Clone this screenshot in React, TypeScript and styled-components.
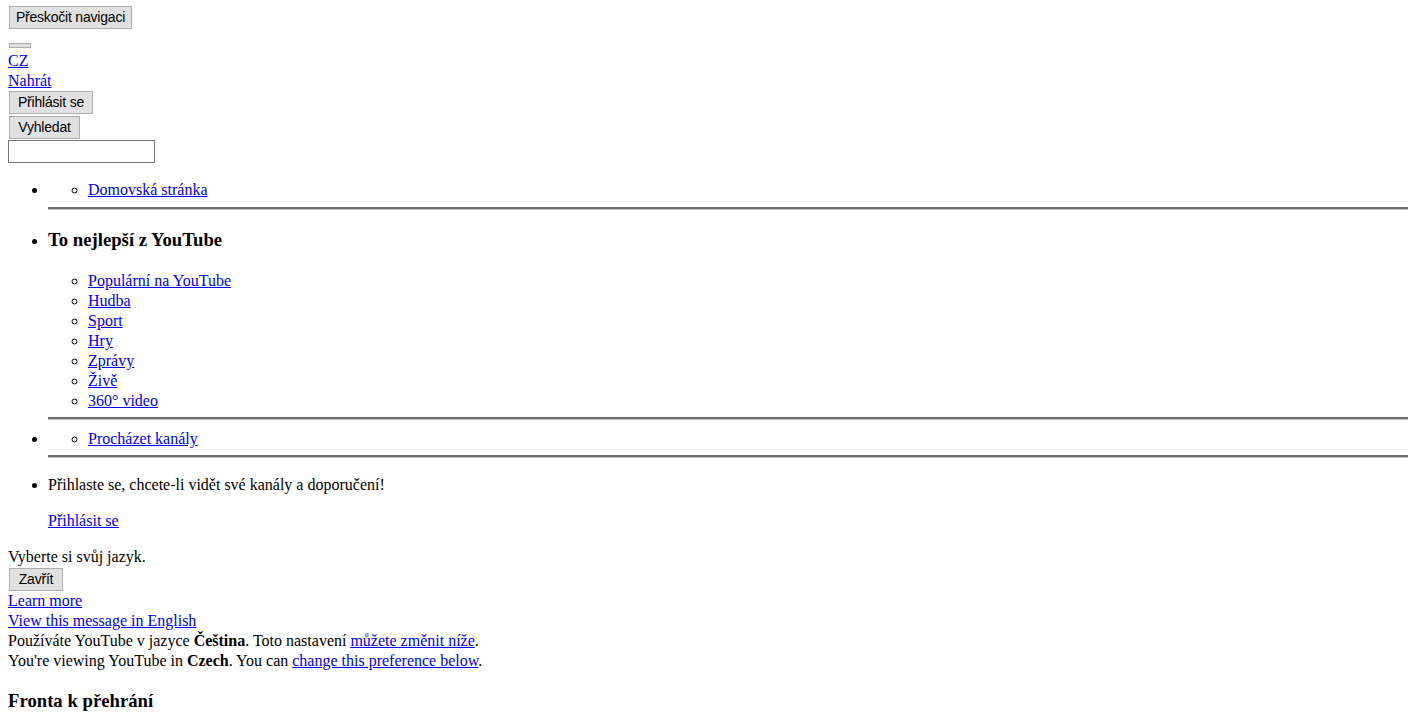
import React from "react";
import styled, { createGlobalStyle } from "styled-components";

const GlobalStyle = createGlobalStyle`
  html, body { margin: 0; padding: 0; background: #fff; }
  body {
    font-family: "Liberation Serif", "Times New Roman", serif;
    font-size: 16px;
    line-height: 20px;
    color: #000;
  }
`;

const Page = styled.div`
  padding: 0 0 0 8px;
  overflow: hidden;
`;

const Masthead = styled.header`
  display: flex;
  flex-direction: column;
  align-items: flex-start;
`;

const PlainButton = styled.button<{ $top?: number; $w: number }>`
  display: block;
  box-sizing: border-box;
  width: ${(p) => p.$w}px;
  height: 23px;
  margin: ${(p) => p.$top ?? 0}px 0 0 1px;
  padding: 0;
  border: 1px solid #adadad;
  background: #e1e1e1;
  color: #000;
  font-family: "Liberation Sans", Arial, sans-serif;
  font-size: 14px;
  letter-spacing: -0.2px;
  line-height: 21px;
  text-align: center;
  white-space: nowrap;
  cursor: pointer;
`;

const MenuButton = styled.button`
  display: block;
  box-sizing: border-box;
  width: 22px;
  height: 5px;
  margin: 14px 0 0 1px;
  padding: 0;
  border: 1px solid #adadad;
  background: #e1e1e1;
`;

const Link = styled.a`
  color: #0000ee;
  text-decoration: underline;
`;

const BlockLink = styled(Link)<{ $top?: number }>`
  display: block;
  margin-top: ${(p) => p.$top ?? 0}px;
`;

const SearchInput = styled.input`
  display: block;
  box-sizing: border-box;
  width: 147px;
  height: 23px;
  margin: 1px 0 0 0;
  padding: 1px 2px;
  border: 1px solid #767676;
  background: #fff;
  font-family: "Liberation Sans", Arial, sans-serif;
  font-size: 13.33px;
`;

const GuideList = styled.ul`
  margin: 17px 0 0 0;
  padding: 0 0 0 40px;
  list-style: disc;
`;

const GuideItem = styled.li``;

const SubList = styled.ul`
  margin: 0;
  padding: 0 0 0 40px;
  list-style: circle;
`;

const SubItem = styled.li``;

const Divider = styled.hr<{ $top?: number; $bottom?: number }>`
  box-sizing: border-box;
  height: 3px;
  margin: ${(p) => p.$top ?? 7}px -8px ${(p) => p.$bottom ?? 8}px 0;
  border: 0;
  border-top: 2px solid #6d6d6d;
  border-bottom: 1px solid #c4c4c4;
`;

const SectionTitle = styled.h3`
  margin: 19px 0 20px;
  font-size: 18.72px;
  line-height: 22px;
  font-weight: bold;
`;

const Para = styled.p`
  margin: 16px 0;
`;

const Notice = styled.div`
  display: flex;
  flex-direction: column;
  align-items: flex-start;
`;

const Line = styled.div``;

const PageTitle = styled.h3`
  margin: 18.72px 0;
  font-size: 18.72px;
  line-height: 22px;
  font-weight: bold;
`;

const bestOf = [
  "Populární na YouTube",
  "Hudba",
  "Sport",
  "Hry",
  "Zprávy",
  "Živě",
  "360° video",
];

export default function App() {
  return (
    <>
      <GlobalStyle />
      <Page>
        <Masthead>
          <PlainButton $top={6} $w={123}>Přeskočit navigaci</PlainButton>
          <MenuButton aria-label="Průvodce" />
          <BlockLink href="#" $top={3}>CZ</BlockLink>
          <BlockLink href="#">Nahrát</BlockLink>
          <PlainButton $w={84}>Přihlásit se</PlainButton>
          <PlainButton $top={2} $w={71}>Vyhledat</PlainButton>
          <SearchInput type="text" />
        </Masthead>

        <GuideList>
          <GuideItem>
            <SubList>
              <SubItem>
                <Link href="#">Domovská stránka</Link>
              </SubItem>
            </SubList>
            <Divider />
          </GuideItem>
          <GuideItem>
            <SectionTitle>To nejlepší z YouTube</SectionTitle>
            <SubList>
              {bestOf.map((t) => (
                <SubItem key={t}>
                  <Link href="#">{t}</Link>
                </SubItem>
              ))}
            </SubList>
            <Divider $top={6} $bottom={9} />
          </GuideItem>
          <GuideItem>
            <SubList>
              <SubItem>
                <Link href="#">Procházet kanály</Link>
              </SubItem>
            </SubList>
            <Divider $top={6} $bottom={17} />
          </GuideItem>
          <GuideItem>
            <Para>Přihlaste se, chcete-li vidět své kanály a doporučení!</Para>
            <Para>
              <Link href="#">Přihlásit se</Link>
            </Para>
          </GuideItem>
        </GuideList>

        <Notice>
          <Line>Vyberte si svůj jazyk.</Line>
          <PlainButton $top={1} $w={54}>Zavřít</PlainButton>
          <BlockLink href="#">Learn more</BlockLink>
          <BlockLink href="#">View this message in English</BlockLink>
          <Line>
            Používáte YouTube v jazyce <b>Čeština</b>. Toto nastavení{" "}
            <Link href="#">můžete změnit níže</Link>.
          </Line>
          <Line>
            You're viewing YouTube in <b>Czech</b>. You can{" "}
            <Link href="#">change this preference below</Link>.
          </Line>
        </Notice>

        <PageTitle>Fronta k přehrání</PageTitle>
      </Page>
    </>
  );
}
